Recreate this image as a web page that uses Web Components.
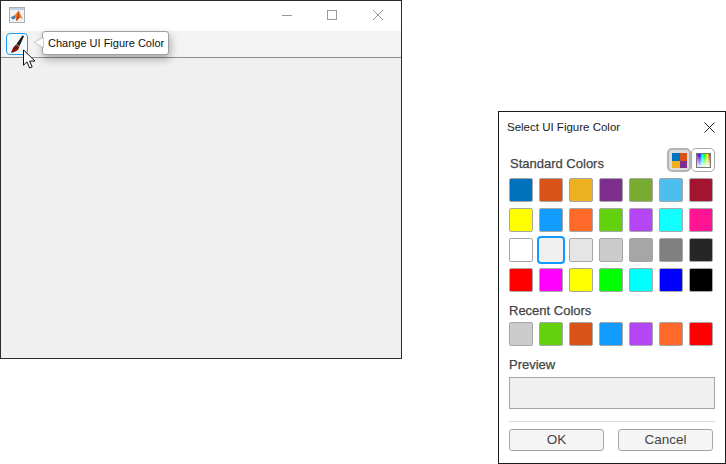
<!DOCTYPE html>
<html><head><meta charset="utf-8">
<style>
html,body{margin:0;padding:0;background:#fff;width:726px;height:464px;overflow:hidden;font-family:"Liberation Sans",Arial,sans-serif}
desk-top{display:block;position:relative;width:726px;height:464px;overflow:hidden}
</style></head>
<body>
<template id="t-figure">
<style>
:host{display:flex;flex-direction:column;position:absolute;left:0;top:0;width:402px;height:359px;box-sizing:border-box;border:1px solid #2b2b2b;background:#f0f0f0}
.title{height:30px;background:#fff;display:flex;align-items:center;padding-left:8px;flex:none}
.logo{width:16px;height:16px;display:block;margin-bottom:2px}
.controls{margin-left:auto;display:flex;height:30px}
.controls svg{display:block;width:46px;height:30px}
.tools{height:27px;box-sizing:border-box;background:#f3f3f3;border-bottom:1px solid #8f8f8f;flex:none;display:flex;align-items:flex-start;padding:2px 0 0 5px}
.canvas{flex:1;background:#f0f0f0}
</style>
<div class="title">
<svg class="logo" viewBox="0 0 16 16"><rect x=".5" y=".5" width="15" height="15" fill="#f1f3f5" stroke="#a9aeb3"/><rect x="1" y="1" width="14" height="2" fill="#b9d2e6"/><path d="M1.500 10.500l3.500-2 2.500 1.500-3.300 2.700z" fill="#3f7fb5"/><path d="M5 8.500C6.500 7.600 7.500 6 9.500 3.500 10.800 5 11.500 8.500 14.500 12.500 12.800 11.500 12 10.500 10.500 11 9.200 12 8.300 13.500 7 14 7.200 12 6.500 10 5 8.500z" fill="#e8801f"/><path d="M9.500 3.500C9.800 6 10.200 8.500 10.500 11 9.200 12 8.300 13.500 7 14 8.200 11 8.300 6.500 9.500 3.500z" fill="#c8401f"/></svg>
<div class="controls">
<svg viewBox="0 0 46 30"><path d="M19 14.500h10" stroke="#999" fill="none"/></svg>
<svg viewBox="0 0 46 30"><rect x="18.500" y="9.500" width="9" height="9" stroke="#999" fill="none"/></svg>
<svg viewBox="0 0 46 30"><path d="M18 9l10 10M28 9L18 19" stroke="#999" fill="none"/></svg>
</div>
</div>
<div class="tools"><slot name="tool"></slot></div>
<div class="canvas"></div>
<slot></slot>
</template>

<template id="t-toolbtn">
<style>
:host{display:block;width:22px;height:22px;box-sizing:border-box;border:1px solid #1a9cff;border-radius:4px;background:#f7fafd;position:relative}
svg{display:block;position:absolute;left:3px;top:1px}
</style>
<svg width="15" height="19" viewBox="0 0 15 19"><path d="M12.600.300l1.400.900-4.500 9.800-3-1.900z" fill="#1c1c1c"/><path d="M6 9.800l3.300 2.100C8.800 15 5 17.300.8 17.700 2.600 15.500 2.300 12.200 6 9.800z" fill="#7a1010"/><path d="M6.500 9l3 1.900-.4 1-3.300-2.100z" fill="#555"/></svg>
</template>

<template id="t-tooltip">
<style>
:host{display:block;position:absolute;left:41px;top:30px;width:127px;height:24px;box-sizing:border-box;background:#fff;border:1px solid #a0a0a0;border-radius:3px;box-shadow:1px 4px 8px rgba(0,0,0,.32);font:11px "Liberation Sans",Arial,sans-serif;color:#111;line-height:22px;padding-left:5px;white-space:nowrap}
.tip{position:absolute;left:-10px;top:5px;width:11px;height:11px;overflow:hidden}
</style>
<svg class="tip" viewBox="0 0 11 12"><path d="M11 .5L.5 6 11 11.500z" fill="#fff" stroke="#c4c4c4"/></svg>
<slot></slot>
</template>

<template id="t-pointer">
<style>:host{display:block;position:absolute;left:21px;top:48px;width:14px;height:20px}svg{display:block}</style>
<svg width="14" height="20" viewBox="0 0 14 20"><path d="M1.500 1v15.200l3.500-3.300 2.600 6 2.600-1-2.600-5.800H13z" fill="#fff" stroke="#111" stroke-width="1"/></svg>
</template>

<template id="t-dialog">
<style>
:host{display:flex;flex-direction:column;position:absolute;left:498px;top:111px;width:228px;height:353px;box-sizing:border-box;border:1px solid #1c1c1c;background:#fff;color:#3c3c3c;font:12px "Liberation Sans",Arial,sans-serif;padding:0 10px 0 10px}
.head{height:30px;display:flex;align-items:center;margin-left:-2px;color:#1a1a1a;font-size:11.500px;flex:none}
.head svg{margin-left:auto;margin-right:0}
</style>
<div class="head"><slot name="title"></slot><svg width="11" height="11" viewBox="0 0 11 11"><path d="M.5.500l10 10M10.500.500l-10 10" stroke="#222" fill="none"/></svg></div>
<slot></slot>
</template>

<template id="t-label">
<style>:host{display:block;font:13px "Liberation Sans",Arial,sans-serif;-webkit-text-stroke:.25px #444;color:#444;height:14px;line-height:14px}</style><slot></slot>
</template>

<template id="t-viewbtns">
<style>
:host{display:flex;gap:0;flex:none}
.b{width:24px;height:24px;box-sizing:border-box;border:1px solid #a8a8a8;border-radius:5px;display:flex;align-items:center;justify-content:center;background:#fff}
.b.on{background:#dcdcdc;border:2px solid #b4b4b4}
svg{display:block}
.ramp{width:15px;height:15px;box-sizing:border-box;border:1px solid #777;background:linear-gradient(to bottom,rgba(255,255,255,0) 0,rgba(255,255,255,.95) 100%),linear-gradient(to right,#f0f,#00f,#0ff,#0f0,#ff0,#f00)}
</style>
<div class="b on"><svg width="15" height="15" viewBox="0 0 15 15" shape-rendering="crispEdges"><rect width="7.500" height="7.500" fill="#0072bd"/><rect x="7.500" width="7.500" height="7.500" fill="#d95319"/><rect y="7.500" width="7.500" height="7.500" fill="#edb120"/><rect x="7.500" y="7.500" width="7.500" height="7.500" fill="#7e2f8e"/></svg></div>
<div class="b"><div class="ramp"></div></div>
</template>

<template id="t-swatches">
<style>
:host{display:grid;grid-template-columns:repeat(7,24px);gap:6px;flex:none}
</style><slot></slot>
</template>

<template id="t-swatch">
<style>
:host{display:block;width:24px;height:24px;box-sizing:border-box;border:1px solid #a6a6a6;border-radius:2px;background:var(--c,#fff)}
:host([selected]){width:28px;height:28px;margin:-2px;border:2px solid #0f9bff;border-radius:4px}
</style>
</template>

<template id="t-preview">
<style>:host{display:block;height:32px;box-sizing:border-box;border:1px solid #a6a6a6;background:#f0f0f0;flex:none;width:206px}</style>
</template>

<template id="t-btn">
<style>:host{display:block;width:95px;height:22px;box-sizing:border-box;border:1px solid #a6a6a6;border-radius:3px;background:#f5f5f5;color:#444;text-align:center;font:13.500px/20px "Liberation Sans",Arial,sans-serif}</style><slot></slot>
</template>

<desk-top>
<figure-window>
<tool-button slot="tool"></tool-button>
<tip-box>Change UI Figure Color</tip-box>
<mouse-pointer></mouse-pointer>
</figure-window>
<color-dialog>
<span slot="title">Select UI Figure Color</span>
<div style="display:flex;align-items:center;height:24px;margin-top:6px;padding-left:1px;flex:none"><sec-label style="margin-top:8px">Standard Colors</sec-label><view-buttons style="margin-left:auto"></view-buttons></div>
<swatch-grid style="margin-top:6px">
<color-swatch style="--c:#0072bd"></color-swatch><color-swatch style="--c:#d95319"></color-swatch><color-swatch style="--c:#edb120"></color-swatch><color-swatch style="--c:#7e2f8e"></color-swatch><color-swatch style="--c:#77ac30"></color-swatch><color-swatch style="--c:#4dbeee"></color-swatch><color-swatch style="--c:#a2142f"></color-swatch>
<color-swatch style="--c:#ffff00"></color-swatch><color-swatch style="--c:#129cff"></color-swatch><color-swatch style="--c:#ff6a2a"></color-swatch><color-swatch style="--c:#63d20e"></color-swatch><color-swatch style="--c:#b446f5"></color-swatch><color-swatch style="--c:#10ffff"></color-swatch><color-swatch style="--c:#ff1493"></color-swatch>
<color-swatch style="--c:#ffffff"></color-swatch><color-swatch selected style="--c:#f0f0f0"></color-swatch><color-swatch style="--c:#e5e5e5"></color-swatch><color-swatch style="--c:#cccccc"></color-swatch><color-swatch style="--c:#a6a6a6"></color-swatch><color-swatch style="--c:#808080"></color-swatch><color-swatch style="--c:#262626"></color-swatch>
<color-swatch style="--c:#ff0000"></color-swatch><color-swatch style="--c:#ff00ff"></color-swatch><color-swatch style="--c:#ffff00"></color-swatch><color-swatch style="--c:#00ff00"></color-swatch><color-swatch style="--c:#00ffff"></color-swatch><color-swatch style="--c:#0000ff"></color-swatch><color-swatch style="--c:#000000"></color-swatch>
</swatch-grid>
<sec-label style="margin-top:12px;margin-bottom:4px">Recent Colors</sec-label>
<swatch-grid>
<color-swatch style="--c:#cccccc"></color-swatch><color-swatch style="--c:#63d20e"></color-swatch><color-swatch style="--c:#d95319"></color-swatch><color-swatch style="--c:#129cff"></color-swatch><color-swatch style="--c:#b446f5"></color-swatch><color-swatch style="--c:#ff6a2a"></color-swatch><color-swatch style="--c:#ff0000"></color-swatch>
</swatch-grid>
<sec-label style="margin-top:12px;margin-bottom:5px">Preview</sec-label>
<preview-box></preview-box>
<div style="height:1px;background:#d9d9d9;margin-top:12px;width:206px;flex:none"></div>
<div style="display:flex;gap:14px;margin-top:7px;flex:none"><push-button>OK</push-button><push-button>Cancel</push-button></div>
</color-dialog>
</desk-top>
<script>
const defs={'figure-window':'t-figure','tool-button':'t-toolbtn','tip-box':'t-tooltip','mouse-pointer':'t-pointer','color-dialog':'t-dialog','sec-label':'t-label','view-buttons':'t-viewbtns','swatch-grid':'t-swatches','color-swatch':'t-swatch','preview-box':'t-preview','push-button':'t-btn'};
for(const [name,id] of Object.entries(defs)){
  customElements.define(name,class extends HTMLElement{
    constructor(){super();this.attachShadow({mode:'open'}).appendChild(document.getElementById(id).content.cloneNode(true));}
  });
}
</script>
</body></html>
